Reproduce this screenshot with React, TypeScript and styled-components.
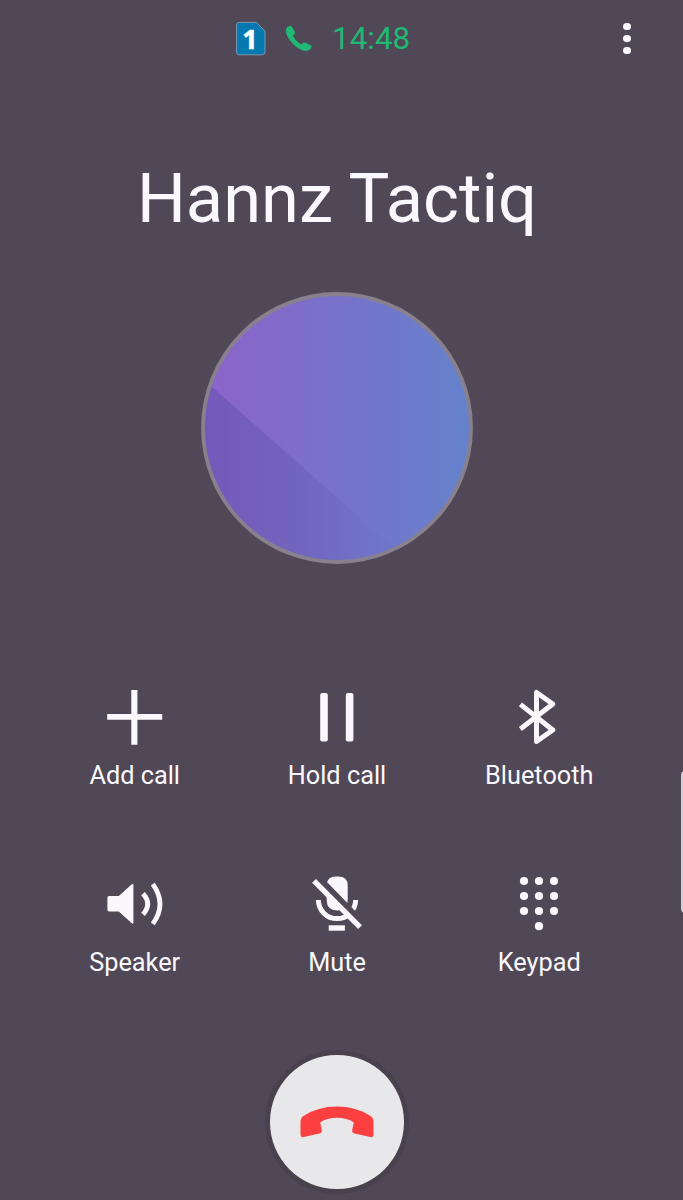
import React from "react";
import styled, { createGlobalStyle } from "styled-components";

const GlobalStyle = createGlobalStyle`
  *, *::before, *::after { box-sizing: border-box; }
  html, body { margin: 0; background: #504856; }
`;

const Screen = styled.main`
  position: relative;
  width: 683px;
  height: 1200px;
  overflow: hidden;
  padding-right: 9px;
  display: flex;
  flex-direction: column;
  align-items: center;
  background: #504856;
  color: #fbf8fd;
  font-family: Roboto, "Liberation Sans", sans-serif;
`;

const StatusBar = styled.header`
  width: 100%;
  height: 78px;
  padding: 0 39px 0 235px;
  display: flex;
  align-items: center;
`;

const SimBadge = styled.svg`
  width: 32px;
  height: 36px;
`;

const StatusPhone = styled.svg`
  width: 28px;
  height: 28px;
  margin-left: 18px;
`;

const Duration = styled.span`
  margin-left: 19px;
  font-size: 31.4px;
  line-height: 38px;
  color: #1fb874;
`;

const MenuButton = styled.button`
  margin-left: auto;
  width: 16px;
  height: 37px;
  margin-bottom: 1px;
  padding: 0;
  border: 0;
  background: none;
  display: flex;
  flex-direction: column;
  align-items: center;
  justify-content: center;
  gap: 4.8px;
`;

const MenuDot = styled.i`
  width: 7.2px;
  height: 7.2px;
  border-radius: 50%;
  background: #fbf8fd;
`;

const CallerName = styled.h1`
  margin: 80px 0 0;
  font-size: 68.6px;
  line-height: 81px;
  font-weight: 400;
  white-space: nowrap;
`;

const Avatar = styled.svg`
  width: 272px;
  height: 272px;
  margin-top: 53px;
  flex: none;
`;

const Actions = styled.section`
  margin-top: 125px;
  display: grid;
  grid-template-columns: repeat(3, 202.3px);
  row-gap: 85px;
`;

const Action = styled.button`
  padding: 0;
  border: 0;
  background: none;
  color: inherit;
  font: inherit;
  display: flex;
  flex-direction: column;
  align-items: center;
`;

const ActionIcon = styled.svg`
  width: 56px;
  height: 56px;
  display: block;
`;

const ActionLabel = styled.span`
  margin-top: 16px;
  font-size: 25.3px;
  line-height: 30px;
  white-space: nowrap;
`;

const EndCall = styled.button`
  margin-top: 77px;
  width: 133.6px;
  height: 133.6px;
  flex: none;
  padding: 0;
  border: 0;
  border-radius: 50%;
  background: #e8e7ea;
  box-shadow: 0 0 0 5px #4a414f;
  display: flex;
  align-items: center;
  justify-content: center;
`;

const HangUpIcon = styled.svg`
  width: 74px;
  height: 32px;
`;

const EdgeHandle = styled.div`
  position: absolute;
  right: -6px;
  top: 771px;
  width: 8.5px;
  height: 142px;
  border-radius: 5px;
  background: #d2ccd4;
`;

const PlusIcon = () => (
  <ActionIcon viewBox="0 0 56 56" fill="currentColor">
    <path d="M24.3 1h6.1v24H55.2v5.8H30.4v24.9h-6.1V30.8H.2v-5.8h24.1z" />
  </ActionIcon>
);

const PauseIcon = () => (
  <ActionIcon viewBox="0 0 56 56" fill="currentColor">
    <rect x="11.2" y="4" width="7.6" height="48.6" rx="2" />
    <rect x="36.8" y="4" width="7.6" height="48.6" rx="2" />
  </ActionIcon>
);

const BluetoothIcon = () => (
  <ActionIcon viewBox="0 0 56 56" fill="none" stroke="currentColor" strokeWidth="5" strokeLinejoin="round">
    <path d="M9.4 40L41.8 15L25.5 3.5V52.5L41.8 41L9.4 15.4" />
  </ActionIcon>
);

const SpeakerIcon = () => (
  <ActionIcon viewBox="0 0 56 56">
    <path
      d="M2 20H11.8L24.8 8.3Q26.4 7.2 26.4 9V46.6Q26.4 48.4 24.8 47.3L11.8 35.5H2Q.4 35.5 .4 33.8V21.7Q.4 20 2 20z"
      fill="currentColor"
    />
    <g fill="none" stroke="currentColor" strokeWidth="4.8">
      <path d="M36 17.7Q45.4 28 36 38.4" />
      <path d="M45.8 8.1Q60.2 28 45.8 47.9" />
    </g>
  </ActionIcon>
);

const MicOffIcon = () => (
  <ActionIcon viewBox="0 0 56 56">
    <mask id="mic-gap" maskUnits="userSpaceOnUse" x="0" y="0" width="56" height="56">
      <rect width="56" height="56" fill="#fff" />
      <path d="M3.6 -4.2L59.6 53" stroke="#000" strokeWidth="6.2" />
    </mask>
    <g mask="url(#mic-gap)">
      <path
        d="M17.7 9.5Q17.7.4 27 .4H29.4Q38.7.4 38.7 9.5V24Q38.7 34.4 28.2 34.4Q17.7 34.4 17.7 24z"
        fill="currentColor"
      />
      <path d="M9.4 24A18.6 18.6 0 0 0 46.6 24" fill="none" stroke="currentColor" strokeWidth="5" />
    </g>
    <path d="M5 4.8L51 51.2" stroke="currentColor" strokeWidth="5.4" />
    <rect x="19.7" y="49.3" width="16.2" height="5.4" fill="currentColor" />
  </ActionIcon>
);

const keypadDots = [5, 20, 35].flatMap((y) => [13, 28, 43].map((x) => [x, y])).concat([[28, 50.2]]);

const KeypadIcon = () => (
  <ActionIcon viewBox="0 0 56 56" fill="currentColor">
    {keypadDots.map(([x, y]) => (
      <circle key={`${x}-${y}`} cx={x} cy={y} r="4.1" />
    ))}
  </ActionIcon>
);

const actions = [
  { label: "Add call", Icon: PlusIcon },
  { label: "Hold call", Icon: PauseIcon },
  { label: "Bluetooth", Icon: BluetoothIcon },
  { label: "Speaker", Icon: SpeakerIcon },
  { label: "Mute", Icon: MicOffIcon },
  { label: "Keypad", Icon: KeypadIcon },
];

export default function App() {
  return (
    <>
      <GlobalStyle />
      <Screen>
        <StatusBar>
          <SimBadge viewBox="0 0 32 36">
            <path
              d="M4 1.4H21.5L30 10V31Q30 33.8 27.2 33.8H4.2Q1.5 33.8 1.5 31V4.1Q1.5 1.4 4 1.4z"
              fill="#0679b0"
              stroke="#7797ad"
              strokeWidth="1"
            />
            <text x="15" y="28" textAnchor="middle" fontFamily="Open Sans" fontWeight="700" fontSize="27" fill="#fff" stroke="#fff" strokeWidth=".5">
              1
            </text>
          </SimBadge>
          <StatusPhone viewBox="0 0 28 28">
            <path
              d="M1.2 3.7Q2 1.5 4.9.7Q6 .4 6.7 1.5L9.8 6.7Q10.4 7.9 9.5 8.9L7.8 11.1Q10.4 15.7 15.7 19.4L18.4 17.8Q19.3 17.1 20.3 17.6L26 20.4Q27 21 26.5 22.1Q24.9 25.8 21 26.1Q14.5 25.6 7.9 18.8Q1.2 11.9.9 6Q.9 4.6 1.2 3.7z"
              fill="#1fb874"
            />
          </StatusPhone>
          <Duration>14:48</Duration>
          <MenuButton aria-label="More options">
            <MenuDot />
            <MenuDot />
            <MenuDot />
          </MenuButton>
        </StatusBar>
        <CallerName>Hannz Tactiq</CallerName>
        <Avatar viewBox="0 0 272 272">
          <defs>
            <linearGradient id="sky">
              <stop offset="0" stopColor="#8c63ca" />
              <stop offset=".25" stopColor="#836aca" />
              <stop offset=".5" stopColor="#7872ca" />
              <stop offset=".75" stopColor="#6e7acb" />
              <stop offset="1" stopColor="#6482cb" />
            </linearGradient>
            <linearGradient id="shade" gradientUnits="userSpaceOnUse" x1="4" y1="0" x2="200" y2="0">
              <stop offset="0" stopColor="#45429a" stopOpacity=".34" />
              <stop offset=".5" stopColor="#5250a0" stopOpacity=".28" />
              <stop offset="1" stopColor="#6068b8" stopOpacity=".06" />
            </linearGradient>
            <clipPath id="disc">
              <circle cx="136" cy="136" r="133" />
            </clipPath>
          </defs>
          <g clipPath="url(#disc)">
            <rect width="272" height="272" fill="url(#sky)" />
            <path d="M0 85L10 94L200 262V272H0z" fill="url(#shade)" />
          </g>
          <circle cx="136" cy="136" r="134" fill="none" stroke="#88808d" strokeWidth="3.8" />
        </Avatar>
        <Actions>
          {actions.map(({ label, Icon }) => (
            <Action key={label}>
              <Icon />
              <ActionLabel>{label}</ActionLabel>
            </Action>
          ))}
        </Actions>
        <EndCall aria-label="End call">
          <HangUpIcon viewBox="0 0 74 32">
            <path
              d="M3 10.2Q18 .6 37 .6T71 10.2Q73.5 12 73.5 15V28.5Q73.5 31.8 70.3 31L54.5 27.4Q51.8 26.6 52.2 24.2L53.8 16.4Q47 11.8 37 11.8T20.2 16.4L21.8 24.2Q22.2 26.6 19.5 27.4L3.7 31Q.5 31.8.5 28.5V15Q.5 12 3 10.2z"
              fill="#fb403f"
            />
          </HangUpIcon>
        </EndCall>
        <EdgeHandle />
      </Screen>
    </>
  );
}
